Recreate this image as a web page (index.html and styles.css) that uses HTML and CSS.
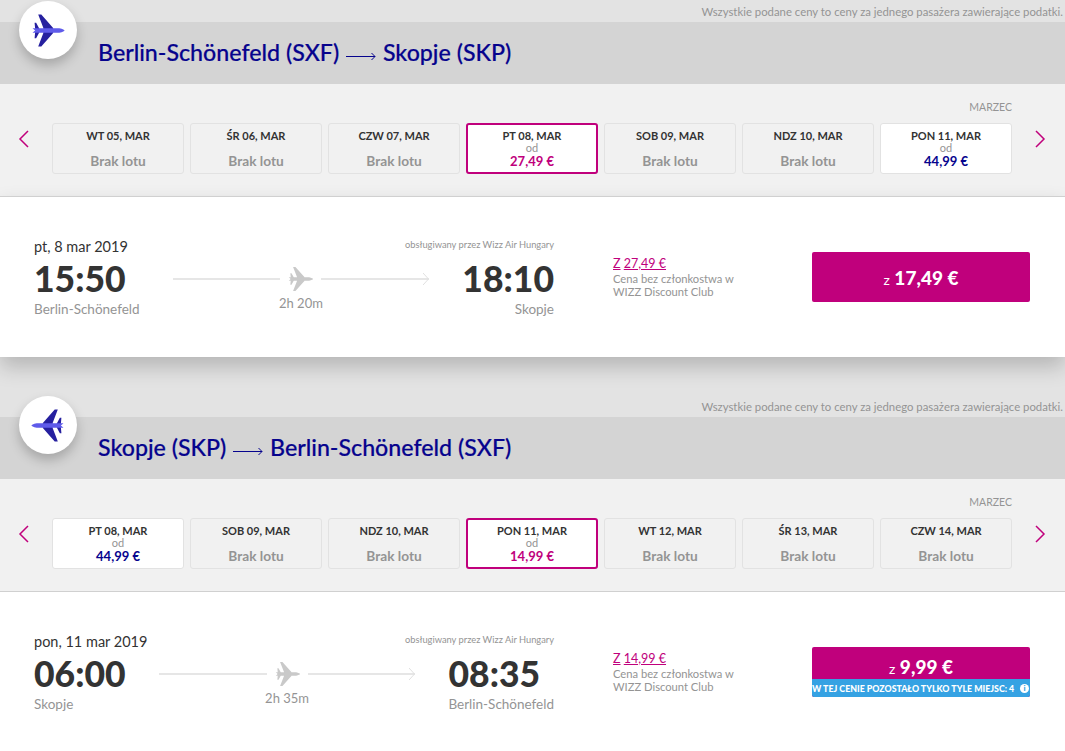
FILE: index.html
```html
<!DOCTYPE html>
<html lang="pl">
<head>
    <meta charset="UTF-8">
    <title>Wizz Air - wybór lotu</title>
    <link rel="stylesheet" href="styles.css">
</head>
<body>
    <svg class="defs" width="0" height="0">
        <defs>
            <symbol id="plane" viewBox="0 0 32 32">
                <path d="M6.500 0.500 L9.500 0.500 L21 13.500 L21 18.500 L9.500 31.500 L6.500 31.500 L11.500 18.500 L11.500 13.500 Z"/>
                <path d="M3 8.500 L4.500 8.500 L7.500 14 L7.500 18 L4.500 23.500 L3 23.500 L3.500 18 L3.500 14 Z"/>
                <path fill="currentColor" d="M1 13.800 L27 13.800 Q32 15 32 16 Q32 17 27 18.200 L1 18.200 L3.500 16 Z"/>
            </symbol>
        </defs>
    </svg>

    <section class="leg">
        <div class="note">Wszystkie podane ceny to ceny za jednego pasażera zawierające podatki.</div>
        <div class="title-bar">
            <div class="badge">
                <svg class="badge-plane" width="34" height="33"><use href="#plane"/></svg>
            </div>
            <h2 class="route-title">
                Berlin-Schönefeld (SXF)
                <svg class="title-arrow" width="30" height="10" viewBox="0 0 30 10"><path d="M0 5.500H29M25.500 2L29 5.500L25.500 9"/></svg>
                Skopje (SKP)
            </h2>
        </div>
        <div class="calendar">
            <div class="month">MARZEC</div>
            <div class="day-row">
                <svg class="chevron" width="12" height="20" viewBox="0 0 12 20"><path d="M10 2L2 10L10 18"/></svg>
                <div class="day"><b>WT 05, MAR</b><span class="no-flight">Brak lotu</span></div>
                <div class="day"><b>ŚR 06, MAR</b><span class="no-flight">Brak lotu</span></div>
                <div class="day"><b>CZW 07, MAR</b><span class="no-flight">Brak lotu</span></div>
                <div class="day selected"><b>PT 08, MAR</b><small>od</small><strong>27,49 €</strong></div>
                <div class="day"><b>SOB 09, MAR</b><span class="no-flight">Brak lotu</span></div>
                <div class="day"><b>NDZ 10, MAR</b><span class="no-flight">Brak lotu</span></div>
                <div class="day open"><b>PON 11, MAR</b><small>od</small><strong>44,99 €</strong></div>
                <svg class="chevron" width="12" height="20" viewBox="0 0 12 20"><path d="M2 2L10 10L2 18"/></svg>
            </div>
        </div>
        <div class="detail">
            <div class="flight">
                <div class="flight-head">
                    <span class="date">pt, 8 mar 2019</span>
                    <span class="operator">obsługiwany przez Wizz Air Hungary</span>
                </div>
                <div class="flight-times">
                    <div class="stop">
                        <div class="time">15:50</div>
                        <div class="city">Berlin-Schönefeld</div>
                    </div>
                    <div class="path">
                        <div class="path-line">
                            <i class="line"></i>
                            <svg class="path-plane" width="25" height="26"><use href="#plane"/></svg>
                            <i class="line"></i>
                            <svg class="path-head" width="6" height="14" viewBox="0 0 6 14"><path d="M0 1L5.500 7L0 13"/></svg>
                        </div>
                        <div class="duration">2h 20m</div>
                    </div>
                    <div class="stop arrive">
                        <div class="time">18:10</div>
                        <div class="city">Skopje</div>
                    </div>
                </div>
            </div>
            <div class="fare-note">
                <a class="old-price" href="#"><span>Z</span> <span>27,49 €</span></a>
                <p>Cena bez członkostwa w<br>WIZZ Discount Club</p>
            </div>
            <button class="price-btn"><small>z</small> 17,49 €</button>
        </div>
    </section>

    <section class="leg">
        <div class="note">Wszystkie podane ceny to ceny za jednego pasażera zawierające podatki.</div>
        <div class="title-bar">
            <div class="badge">
                <svg class="badge-plane flip" width="34" height="33"><use href="#plane"/></svg>
            </div>
            <h2 class="route-title">
                Skopje (SKP)
                <svg class="title-arrow" width="30" height="10" viewBox="0 0 30 10"><path d="M0 5.500H29M25.500 2L29 5.500L25.500 9"/></svg>
                Berlin-Schönefeld (SXF)
            </h2>
        </div>
        <div class="calendar">
            <div class="month">MARZEC</div>
            <div class="day-row">
                <svg class="chevron" width="12" height="20" viewBox="0 0 12 20"><path d="M10 2L2 10L10 18"/></svg>
                <div class="day open"><b>PT 08, MAR</b><small>od</small><strong>44,99 €</strong></div>
                <div class="day"><b>SOB 09, MAR</b><span class="no-flight">Brak lotu</span></div>
                <div class="day"><b>NDZ 10, MAR</b><span class="no-flight">Brak lotu</span></div>
                <div class="day selected"><b>PON 11, MAR</b><small>od</small><strong>14,99 €</strong></div>
                <div class="day"><b>WT 12, MAR</b><span class="no-flight">Brak lotu</span></div>
                <div class="day"><b>ŚR 13, MAR</b><span class="no-flight">Brak lotu</span></div>
                <div class="day"><b>CZW 14, MAR</b><span class="no-flight">Brak lotu</span></div>
                <svg class="chevron" width="12" height="20" viewBox="0 0 12 20"><path d="M2 2L10 10L2 18"/></svg>
            </div>
        </div>
        <div class="detail last">
            <div class="flight">
                <div class="flight-head">
                    <span class="date">pon, 11 mar 2019</span>
                    <span class="operator">obsługiwany przez Wizz Air Hungary</span>
                </div>
                <div class="flight-times">
                    <div class="stop">
                        <div class="time">06:00</div>
                        <div class="city">Skopje</div>
                    </div>
                    <div class="path">
                        <div class="path-line">
                            <i class="line"></i>
                            <svg class="path-plane" width="25" height="26"><use href="#plane"/></svg>
                            <i class="line"></i>
                            <svg class="path-head" width="6" height="14" viewBox="0 0 6 14"><path d="M0 1L5.500 7L0 13"/></svg>
                        </div>
                        <div class="duration">2h 35m</div>
                    </div>
                    <div class="stop arrive">
                        <div class="time">08:35</div>
                        <div class="city">Berlin-Schönefeld</div>
                    </div>
                </div>
            </div>
            <div class="fare-note">
                <a class="old-price" href="#"><span>Z</span> <span>14,99 €</span></a>
                <p>Cena bez członkostwa w<br>WIZZ Discount Club</p>
            </div>
            <button class="price-btn has-strip">
                <span class="btn-price"><small>z</small> 9,99 €</span>
                <span class="seats-left">W TEJ CENIE POZOSTAŁO TYLKO TYLE MIEJSC: 4 <i class="info">i</i></span>
            </button>
        </div>
    </section>
</body>
</html>
```

FILE: styles.css
```css
* {
    box-sizing: border-box;
}
html, body {
    margin: 0;
    height: 751px;
    overflow: hidden;
}
body {
    font-family: "Lato", "Open Sans", sans-serif;
    background-color: #e3e3e3;
    color: #333;
}
.defs {
    position: absolute;
}
.leg + .leg {
    margin-top: 38px;
}
.note {
    height: 22px;
    padding: 5px 2px 0 0;
    text-align: right;
    font-size: 11.350px;
    line-height: 14px;
    color: #949494;
}
.title-bar {
    position: relative;
    height: 62px;
    padding: 16px 0 0 98px;
    background-color: #d4d4d4;
}
.route-title {
    margin: 0;
    font-size: 23.200px;
    line-height: 28px;
    font-weight: 500;
    color: #06038d;
    -webkit-text-stroke: 0.2px #06038d;
}
.title-arrow {
    vertical-align: 0;
    margin: 0 1px;
}
.title-arrow path {
    fill: none;
    stroke: #06038d;
    stroke-width: 1;
}
.badge {
    position: absolute;
    left: 19px;
    top: -21px;
    width: 58px;
    height: 58px;
    border-radius: 50%;
    background-color: #fff;
    display: flex;
    align-items: center;
    justify-content: center;
    box-shadow: 0 6px 12px rgba(0, 0, 0, 0.22);
}
.badge-plane {
    fill: #26209f;
    color: #5f5bea;
}
.flip {
    transform: scaleX(-1);
}
.calendar {
    height: 112px;
    padding-top: 16px;
    background-color: #f1f1f1;
}
.month {
    height: 23px;
    padding-right: 53px;
    text-align: right;
    font-size: 10.500px;
    line-height: 14px;
    color: #949494;
}
.day-row {
    display: flex;
    align-items: flex-start;
    gap: 6px;
    padding-left: 18px;
}
.chevron {
    flex: none;
    margin-top: 6px;
    fill: none;
    stroke: #c0007c;
    stroke-width: 1.5;
}
.chevron:first-child {
    margin-right: 16px;
}
.chevron:last-child {
    margin-left: 16px;
}
.day {
    width: 132px;
    height: 51px;
    flex: none;
    display: flex;
    flex-direction: column;
    align-items: center;
    padding-top: 5px;
    border: 1px solid #e2e2e2;
    border-radius: 3px;
    font-size: 11px;
    line-height: 13px;
}
.day b {
    color: #333;
}
.day small {
    font-size: 11px;
    line-height: 12px;
    color: #949494;
}
.day strong {
    font-size: 13px;
    line-height: 15px;
    color: #06038d;
}
.no-flight {
    margin-top: 11px;
    font-size: 13.700px;
    line-height: 15px;
    font-weight: 700;
    color: #949494;
}
.open {
    background-color: #fff;
}
.selected {
    background-color: #fff;
    border: 2px solid #c0007c;
    padding-top: 4px;
}
.selected strong {
    color: #c0007c;
}
.detail {
    height: 161px;
    display: flex;
    align-items: flex-start;
    padding: 40px 35px 0 34px;
    background-color: #fff;
    border-top: 1px solid #d0d0d0;
    box-shadow: 0 10px 20px rgba(0, 0, 0, 0.2);
}
.detail.last {
    height: 160px;
    box-shadow: none;
}
.flight {
    width: 520px;
    flex: none;
}
.flight-head {
    display: flex;
    justify-content: space-between;
    align-items: flex-start;
    height: 21px;
}
.date {
    font-size: 14.500px;
    line-height: 20px;
}
.operator {
    font-size: 9.300px;
    line-height: 16px;
    color: #949494;
}
.flight-times {
    display: flex;
    gap: 33px;
}
.time {
    font-size: 35.500px;
    line-height: 42px;
    font-weight: 900;
    color: #333;
}
.city {
    font-size: 13.500px;
    line-height: 18px;
    color: #949494;
}
.arrive .city {
    text-align: right;
}
.path {
    flex: 1;
    padding-top: 8px;
    text-align: center;
}
.path-line {
    display: flex;
    align-items: center;
    gap: 8px;
    height: 26px;
}
.line {
    flex: 1;
    height: 2px;
    background-color: #e6e6e6;
}
.path-plane {
    fill: #c9c9c9;
    color: #c9c9c9;
}
.path-head {
    margin-left: -14px;
    fill: none;
    stroke: #e0e0e0;
}
.duration {
    margin-top: 2px;
    font-size: 13px;
    line-height: 18px;
    color: #949494;
}
.fare-note {
    width: 199px;
    flex: none;
    margin: 19px 0 0 59px;
    font-size: 11.200px;
    line-height: 13px;
    color: #949494;
}
.old-price {
    display: block;
    font-size: 12.500px;
    line-height: 15px;
    color: #c0007c;
    text-decoration: none;
}
.old-price span {
    text-decoration: underline;
}
.fare-note p {
    margin: 1px 0 0;
}
.price-btn {
    width: 218px;
    height: 50px;
    flex: none;
    margin-top: 15px;
    padding: 0;
    overflow: hidden;
    border: none;
    border-radius: 2px;
    background-color: #c0007c;
    color: #fff;
    font-family: inherit;
    font-size: 19px;
    font-weight: 900;
}
.price-btn small {
    font-size: 14px;
    font-weight: 400;
}
.has-strip {
    display: flex;
    flex-direction: column;
}
.btn-price {
    height: 32px;
    padding-top: 8px;
    line-height: 24px;
}
.seats-left {
    display: flex;
    align-items: center;
    justify-content: space-between;
    height: 18px;
    padding-right: 1px;
    background-color: #35a2e3;
    font-size: 8.800px;
    font-weight: 900;
    white-space: nowrap;
}
.info {
    width: 9px;
    height: 9px;
    flex: none;
    border-radius: 50%;
    background-color: #fff;
    color: #35a2e3;
    font-size: 8px;
    line-height: 9px;
    font-style: normal;
}
```
